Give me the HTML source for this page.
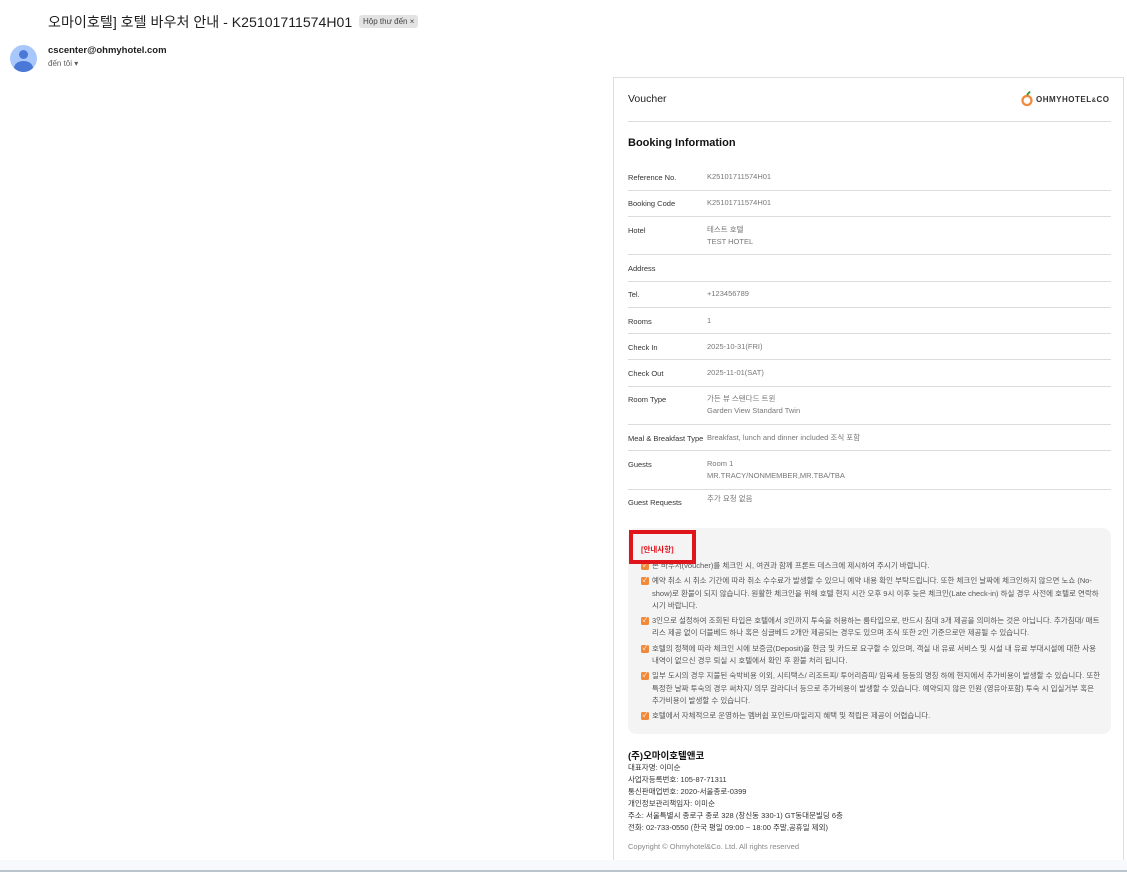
<!DOCTYPE html>
<html><head><meta charset="utf-8">
<style>
*{margin:0;padding:0;box-sizing:border-box}
body{width:1127px;height:872px;background:#fff;position:relative;overflow:hidden;font-family:"Liberation Sans","Noto Sans CJK KR",sans-serif;color:#222}
.a{position:absolute;white-space:nowrap}
.subj{left:48px;top:12px;font-size:14.1px;color:#1f1f1f}
.tag{left:359px;top:15px;background:#e3e3e3;color:#444;font-size:8px;padding:2px 4px;border-radius:3px}
.av{left:10px;top:45px;width:27px;height:27px;border-radius:50%;background:#a8c7fa;overflow:hidden}
.av:before{content:"";position:absolute;left:9px;top:5px;width:9px;height:9px;border-radius:50%;background:#4a78d6}
.av:after{content:"";position:absolute;left:4px;top:16px;width:19px;height:14px;border-radius:50%;background:#4a78d6}
.from{left:48px;top:45px;font-size:9.5px;font-weight:bold;color:#1f1f1f}
.to{left:48px;top:59px;font-size:8px;color:#5e5e5e}
.card{left:613px;top:77px;width:511px;height:790px;border:1px solid #dedede;border-bottom:none}
.sep{position:absolute;left:628px;width:483px;height:1px;background:#dcdcdc}
.lbl{left:628px;font-size:7.5px;color:#333}
.val{left:707px;font-size:7.5px;color:#777;line-height:12px}
.box{left:628px;top:528px;width:483px;height:206px;background:#f4f4f4;border-radius:8px}
.red{left:629px;top:530px;width:67px;height:34px;border:4px solid #e0141b}
.notice{left:641px;top:560px;width:460px;font-size:7.5px;color:#555;line-height:12.3px;white-space:normal}
.notice div{position:relative;padding-left:11px;margin-bottom:3px}
.notice div:before{content:"✓";position:absolute;left:0;top:2px;width:8px;height:8px;background:#f08a3a;border-radius:1.5px;color:#fff;font-size:7px;line-height:8px;text-align:center}
.ft{left:628px;font-size:7.5px;color:#333}
</style></head><body>
<div class="a subj">오마이호텔] 호텔 바우처 안내 - K25101711574H01</div>
<div class="a tag">Hộp thư đến ×</div>
<div class="a av"></div>
<div class="a from">cscenter@ohmyhotel.com</div>
<div class="a to">đến tôi ▾</div>
<div class="a card"></div>
<div class="a" style="left:628px;top:93px;font-size:10.5px;color:#222">Voucher</div>
<div class="a" style="left:1021px;top:90px;">
<svg width="14" height="17" viewBox="0 0 14 17"><circle cx="6" cy="10.5" r="4.5" fill="none" stroke="#f08a3a" stroke-width="2.2"/><path d="M6 5 L9 1.5" stroke="#3a9a3a" stroke-width="2"/></svg></div>
<div class="a" style="left:1036px;top:95px;font-size:8px;font-weight:bold;letter-spacing:.5px;color:#333">OHMYHOTEL<span style="font-size:6px">&amp;</span>CO</div>
<div class="sep" style="top:121px"></div>
<div class="a" style="left:628px;top:137px;font-size:11px;font-weight:bold;color:#111">Booking Information</div>

<div class="a lbl" style="top:173px">Reference No.</div><div class="a val" style="top:171px">K25101711574H01</div>
<div class="sep" style="top:190px"></div>
<div class="a lbl" style="top:199px">Booking Code</div><div class="a val" style="top:197px">K25101711574H01</div>
<div class="sep" style="top:216px"></div>
<div class="a lbl" style="top:226px">Hotel</div><div class="a val" style="top:224px">테스트 호텔<br>TEST HOTEL</div>
<div class="sep" style="top:254px"></div>
<div class="a lbl" style="top:264px">Address</div>
<div class="sep" style="top:281px"></div>
<div class="a lbl" style="top:290px">Tel.</div><div class="a val" style="top:288px">+123456789</div>
<div class="sep" style="top:307px"></div>
<div class="a lbl" style="top:317px">Rooms</div><div class="a val" style="top:315px">1</div>
<div class="sep" style="top:333px"></div>
<div class="a lbl" style="top:343px">Check In</div><div class="a val" style="top:341px">2025-10-31(FRI)</div>
<div class="sep" style="top:359px"></div>
<div class="a lbl" style="top:369px">Check Out</div><div class="a val" style="top:367px">2025-11-01(SAT)</div>
<div class="sep" style="top:386px"></div>
<div class="a lbl" style="top:395px">Room Type</div><div class="a val" style="top:393px">가든 뷰 스탠다드 트윈<br>Garden View Standard Twin</div>
<div class="sep" style="top:424px"></div>
<div class="a lbl" style="top:434px">Meal &amp; Breakfast Type</div><div class="a val" style="top:432px">Breakfast, lunch and dinner included 조식 포함</div>
<div class="sep" style="top:450px"></div>
<div class="a lbl" style="top:460px">Guests</div><div class="a val" style="top:458px">Room 1<br>MR.TRACY/NONMEMBER,MR.TBA/TBA</div>
<div class="sep" style="top:489px"></div>
<div class="a lbl" style="top:498px">Guest Requests</div><div class="a val" style="top:493px">추가 요청 없음</div>

<div class="a box"></div>
<div class="a" style="left:641px;top:544px;font-size:7.5px;font-weight:bold;color:#e0141b">[안내사항]</div>
<div class="a notice">
<div>본 바우처(voucher)를 체크인 시, 여권과 함께 프론트 데스크에 제시하여 주시기 바랍니다.</div>
<div>예약 취소 시 취소 기간에 따라 취소 수수료가 발생할 수 있으니 예약 내용 확인 부탁드립니다. 또한 체크인 날짜에 체크인하지 않으면 노쇼 (No-show)로 환불이 되지 않습니다. 원활한 체크인을 위해 호텔 현지 시간 오후 9시 이후 늦은 체크인(Late check-in) 하실 경우 사전에 호텔로 연락하시기 바랍니다.</div>
<div>3인으로 설정하여 조회된 타입은 호텔에서 3인까지 투숙을 허용하는 룸타입으로, 반드시 침대 3개 제공을 의미하는 것은 아닙니다. 추가침대/ 매트리스 제공 없이 더블베드 하나 혹은 싱글베드 2개만 제공되는 경우도 있으며 조식 또한 2인 기준으로만 제공될 수 있습니다.</div>
<div>호텔의 정책에 따라 체크인 시에 보증금(Deposit)을 현금 및 카드로 요구할 수 있으며, 객실 내 유료 서비스 및 시설 내 유료 부대시설에 대한 사용내역이 없으신 경우 퇴실 시 호텔에서 확인 후 환불 처리 됩니다.</div>
<div>일부 도시의 경우 지불된 숙박비용 이외, 시티택스/ 리조트피/ 투어리즘피/ 임육세 등등의 명칭 하에 현지에서 추가비용이 발생할 수 있습니다. 또한 특정한 날짜 투숙의 경우 써차지/ 의무 갈라디너 등으로 추가비용이 발생할 수 있습니다. 예약되지 않은 인원 (영유아포함) 투숙 시 입실거부 혹은 추가비용이 발생할 수 있습니다.</div>
<div>호텔에서 자체적으로 운영하는 멤버쉽 포인트/마일리지 혜택 및 적립은 제공이 어렵습니다.</div>
</div>
<div class="a red"></div>

<div class="a" style="left:628px;top:748px;font-size:9.5px;font-weight:bold;color:#111">(주)오마이호텔앤코</div>
<div class="a ft" style="top:762px">대표자명: 이미순</div>
<div class="a ft" style="top:774px">사업자등록번호: 105-87-71311</div>
<div class="a ft" style="top:786px">통신판매업번호: 2020-서울종로-0399</div>
<div class="a ft" style="top:798px">개인정보관리책임자: 이미순</div>
<div class="a ft" style="top:810px">주소: 서울특별시 종로구 종로 328 (창신동 330-1) GT동대문빌딩 6층</div>
<div class="a ft" style="top:822px">전화: 02-733-0550 (한국 평일 09:00 ~ 18:00 주말,공휴일 제외)</div>
<div class="a ft" style="top:842px;color:#888">Copyright © Ohmyhotel&amp;Co. Ltd. All rights reserved</div>

<div class="a" style="left:0;top:860px;width:1127px;height:10px;background:#f7f9fc"></div>
<div class="a" style="left:0;top:870px;width:1127px;height:2px;background:#b9c6cd"></div>
</body></html>
